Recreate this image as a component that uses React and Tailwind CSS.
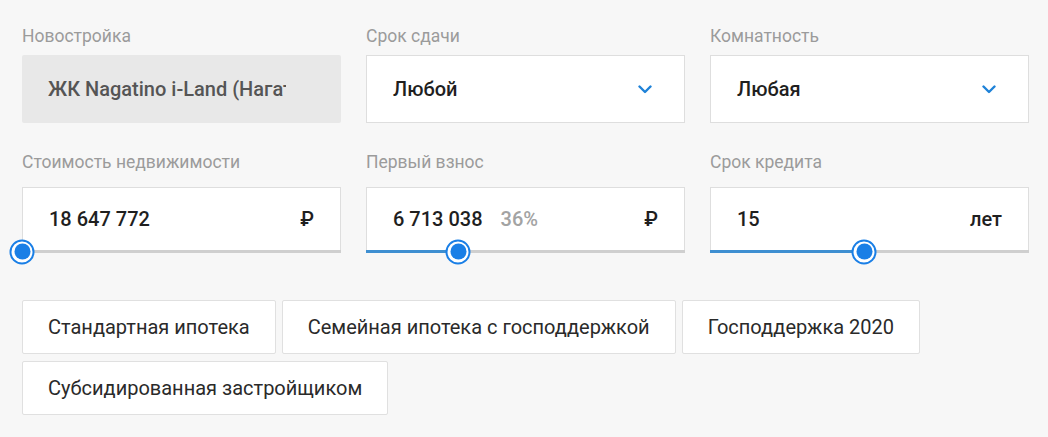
import React from 'react';

const font = { fontFamily: 'Roboto, "Noto Sans", Arial, sans-serif' };

function Label({ children }) {
  return <div className="text-[17.5px] leading-6 text-[#9b9b9b]">{children}</div>;
}

function Chevron() {
  return (
    <svg width="14" height="9" viewBox="0 0 14 9" fill="none">
      <path d="M1.5 1.5L7 7l5.5-5.5" stroke="#1e82d8" strokeWidth="2.4" strokeLinecap="round" strokeLinejoin="round" />
    </svg>
  );
}

function Select({ value }) {
  return (
    <div className="h-[68px] bg-white border border-[#dedede] flex items-center justify-between pl-[26px] pr-[32px]">
      <span className="text-[20px] font-medium text-[#1f1f1f]">{value}</span>
      <Chevron />
    </div>
  );
}

function Knob({ left }) {
  return (
    <div
      className="absolute top-1/2 w-[25px] h-[25px] -translate-x-1/2 -translate-y-1/2 rounded-full bg-white border-2 border-[#1a7fe6] flex items-center justify-center"
      style={{ left }}
    >
      <div className="w-[16px] h-[16px] rounded-full bg-[#1a7fe6]" />
    </div>
  );
}

function SliderField({ value, extra, unit, fill }) {
  return (
    <div className="flex flex-col">
      <div className="h-[63px] bg-white border border-b-0 border-[#dedede] flex items-center justify-between pl-[26px] pr-[26px]">
        <div className="flex items-baseline gap-[18px]">
          <span className="text-[20px] font-medium text-[#1f1f1f]">{value}</span>
          {extra && <span className="text-[20px] font-medium text-[#a3a3a3]">{extra}</span>}
        </div>
        <span className="text-[20px] font-medium text-[#1f1f1f]">{unit}</span>
      </div>
      <div className="relative h-[3px] bg-[#cfcfcf]">
        <div className="h-full bg-[#3e8fd1]" style={{ width: fill }} />
        <Knob left={fill} />
      </div>
    </div>
  );
}

const programs = [
  'Стандартная ипотека',
  'Семейная ипотека с господдержкой',
  'Господдержка 2020',
  'Субсидированная застройщиком',
];

export default function App() {
  return (
    <div className="min-h-[437px] bg-[#f7f7f7] pl-[22px] pr-[19px] pt-[24px]" style={font}>
      <div className="grid grid-cols-3 gap-x-[25px]">
        <div>
          <Label>Новостройка</Label>
          <div className="mt-[7px] h-[68px] bg-[#e8e8e8] rounded-[2px] flex items-center pl-[26px]">
            <span className="block w-[238px] overflow-hidden whitespace-nowrap text-[20px] font-medium text-[#555]">
              ЖК Nagatino i-Land (Нагатинская)
            </span>
          </div>
        </div>
        <div>
          <Label>Срок сдачи</Label>
          <div className="mt-[7px]">
            <Select value="Любой" />
          </div>
        </div>
        <div>
          <Label>Комнатность</Label>
          <div className="mt-[7px]">
            <Select value="Любая" />
          </div>
        </div>
      </div>

      <div className="grid grid-cols-3 gap-x-[25px] mt-[27px]">
        <div>
          <Label>Стоимость недвижимости</Label>
          <div className="mt-[13px]">
            <SliderField value="18 647 772" unit="₽" fill={0} />
          </div>
        </div>
        <div>
          <Label>Первый взнос</Label>
          <div className="mt-[13px]">
            <SliderField value="6 713 038" extra="36%" unit="₽" fill={92} />
          </div>
        </div>
        <div>
          <Label>Срок кредита</Label>
          <div className="mt-[13px]">
            <SliderField value="15" unit="лет" fill={154} />
          </div>
        </div>
      </div>

      <div className="flex flex-wrap gap-x-[6px] gap-y-[7px] mt-[47px] max-w-[920px]">
        {programs.map((p) => (
          <button
            key={p}
            className="h-[54px] px-[25px] bg-white border border-[#e0e0e0] rounded-[2px] text-[20px] text-[#2a2a2a]"
          >
            {p}
          </button>
        ))}
      </div>
    </div>
  );
}
